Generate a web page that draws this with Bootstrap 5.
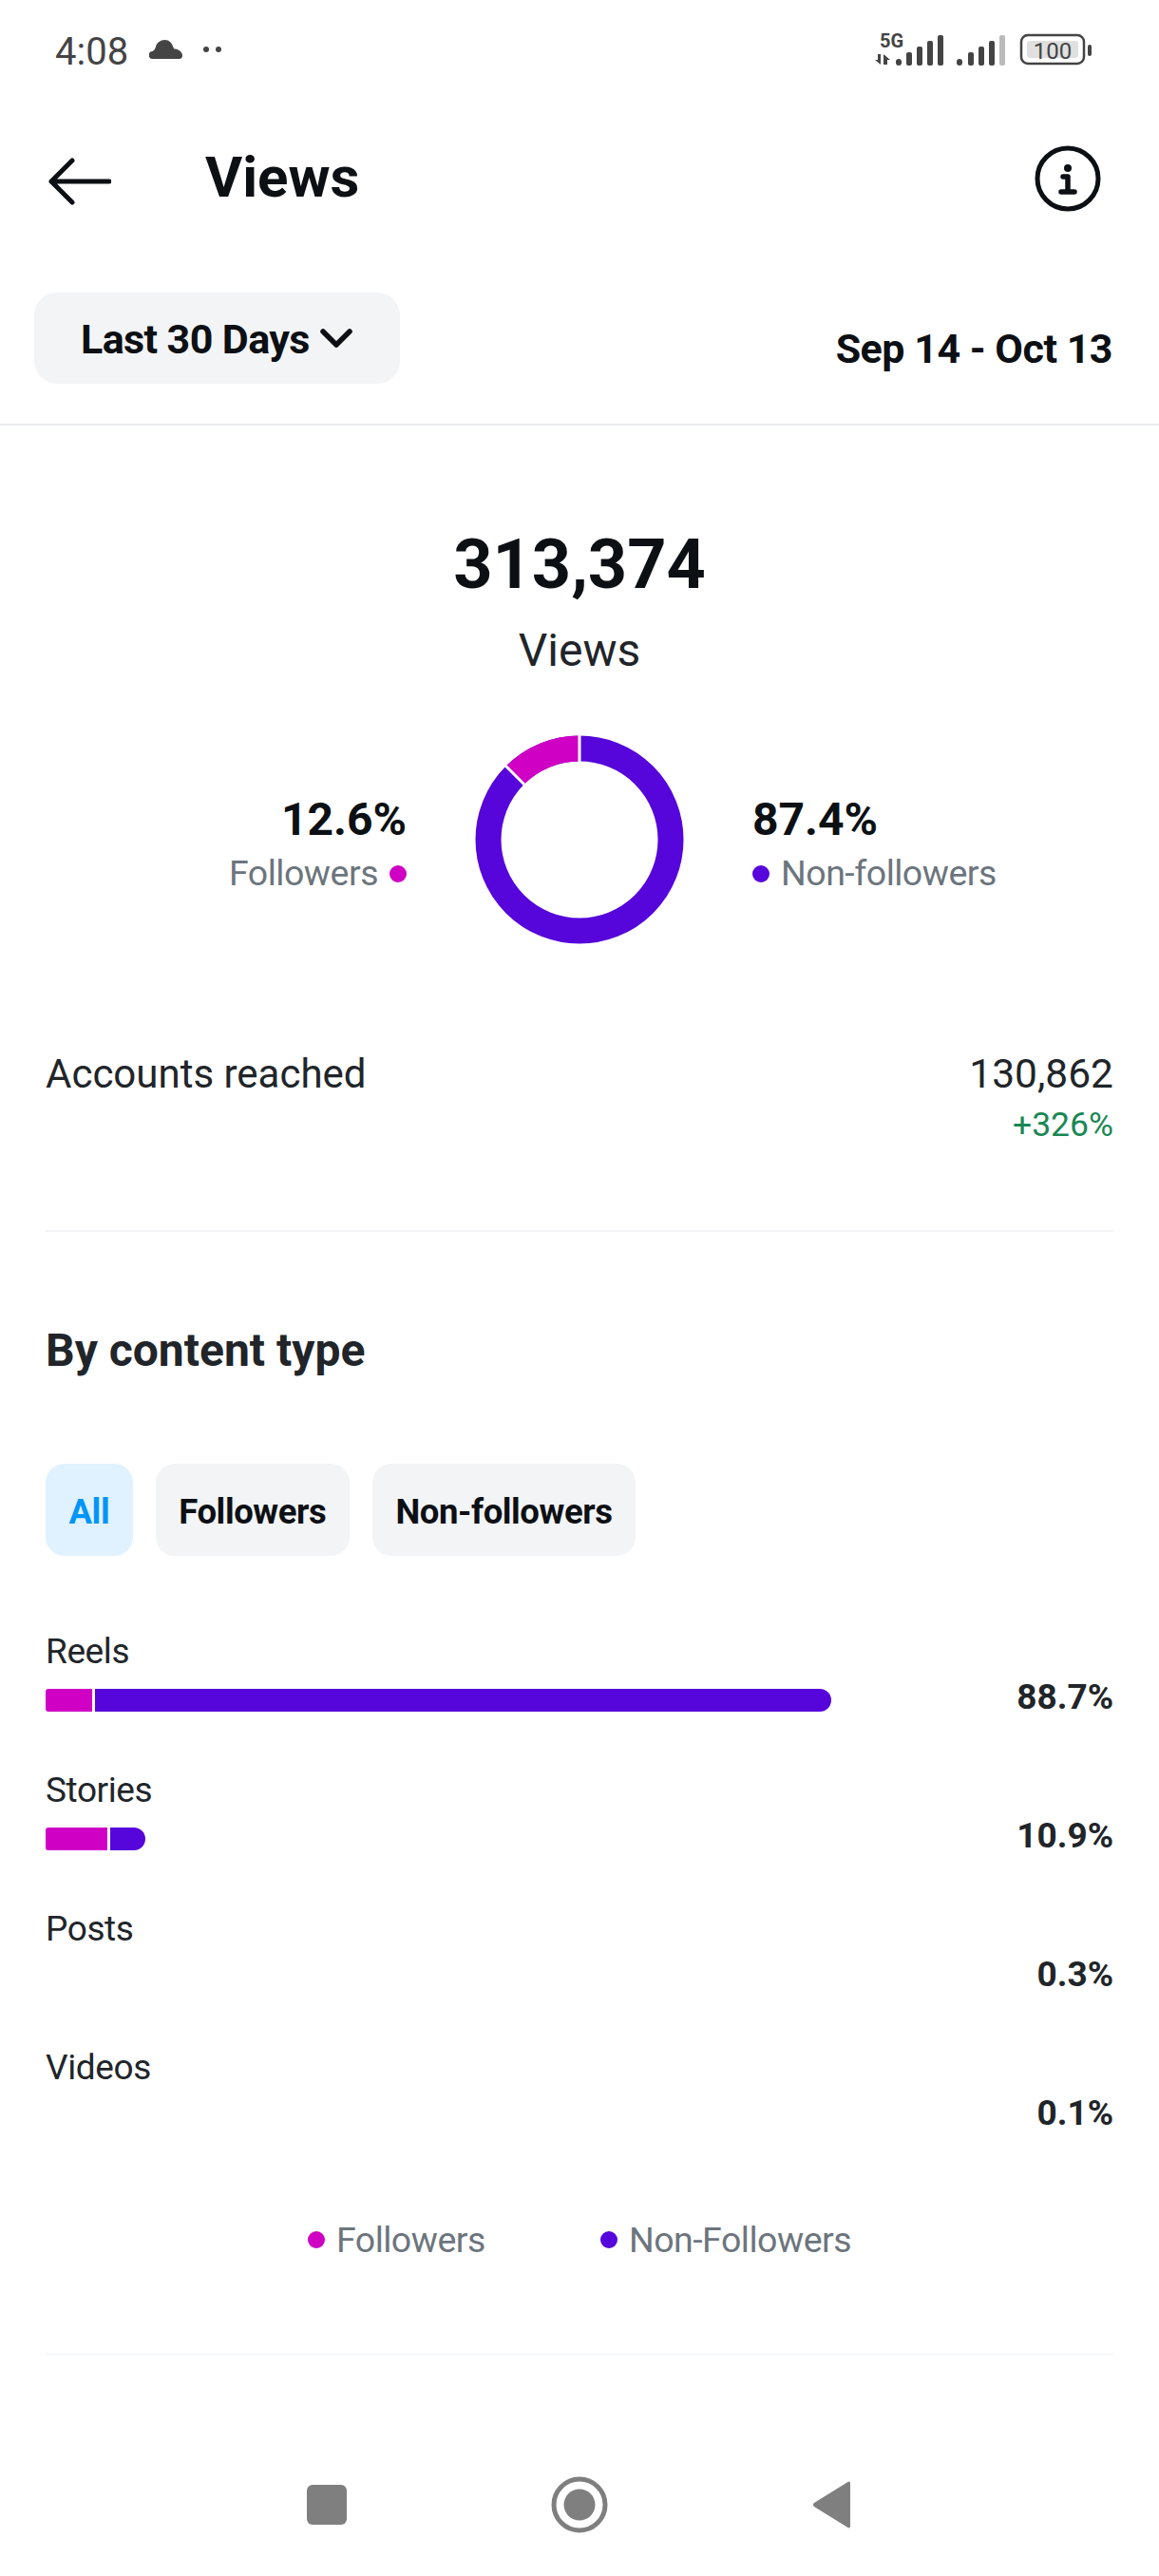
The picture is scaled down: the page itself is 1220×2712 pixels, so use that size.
<!DOCTYPE html>
<html lang="en">
<head>
<meta charset="utf-8">
<title>Views</title>
<link href="https://cdn.jsdelivr.net/npm/bootstrap@5.3.0/dist/css/bootstrap.min.css" rel="stylesheet">
<style>
:root { --ink:#0c1014; --pink:#cf00c4; --violet:#5605db; --mute:#6c757d; }
body { font-family: Roboto, "Liberation Sans", sans-serif; color: var(--ink); background:#fff; width:1220px; }
.status-bar { height:109px; padding:0 71px 0 58px; color:#444; }
.clock { font-size:40px; line-height:1; }
.lift-icon { margin-bottom:6px; margin-left:22px; }
.head-bar { height:158px; padding:0 61px 0 51px; }
.arrow-ico { margin-top:6px; }
.head-title { font-size:60px; line-height:1; font-weight:700; margin:0 0 2px 99px; }
.filter-row { padding:41px 49px 42px 36px; border-bottom:2px solid #e9ecef; }
.range-btn { height:96px; width:385px; background:#f3f4f6; border:0; border-radius:24px; font-size:43px; font-weight:700; letter-spacing:-.6px; color:var(--ink); padding:0 0 0 49px; }
.range-txt { padding-top:3px; }
.chev-ico { margin-left:11px; }
.range-date { font-size:43px; line-height:50px; font-weight:700; letter-spacing:-.5px; margin-top:34px; }
.total-num { font-size:72px; line-height:80px; font-weight:700; margin-top:107px; }
.total-lbl { font-size:48px; line-height:60px; margin-top:20px; color:#212529; }
.donut-row { margin-top:59px; height:220px; gap:72px; }
.donut-side { flex:1 1 0; padding-top:60px; }
.side-pct { font-size:48px; line-height:57px; font-weight:700; }
.side-lbl { font-size:37.5px; line-height:57px; letter-spacing:-.5px; color:var(--mute); }
.dot-mark { width:18px; height:18px; border-radius:50%; flex:none; }
.dot-pink { background:var(--pink); }
.dot-violet { background:var(--violet); }
.pad-x { padding-left:48px; padding-right:48px; }
.reach-row { margin-top:112px; color:#212529; font-size:42px; line-height:50px; }
.reach-num { font-size:42.5px; }
.reach-up { font-size:35.5px; line-height:44px; margin-top:6px; color:#198754; }
.soft-rule { height:2px; margin:89px 48px 0; background:#f3f4f6; }
.type-title { font-size:48px; line-height:60px; font-weight:700; margin:95px 0 0; color:#212529; }
.chip-row { margin-top:89px; gap:24px; }
.chip-btn { height:97px; border:0; border-radius:20px; background:#f3f4f6; color:var(--ink); font-size:36.5px; font-weight:700; letter-spacing:-.4px; padding:5px 24.5px 0; }
.chip-btn.chip-on { background:#e0f1ff; color:#0095f6; }
.bars-wrap { margin-top:76px; }
.bar-row { height:88px; margin-bottom:58px; }
.bar-row:last-child { margin-bottom:0; }
.bar-lbl { font-size:37px; line-height:44px; letter-spacing:-.4px; padding-top:3px; height:47px; color:#212529; }
.bar-track { height:24px; margin-top:17px; gap:3px; }
.seg-a { background:var(--pink); border-radius:3px 0 0 3px; }
.seg-b { background:var(--violet); border-radius:0 13px 13px 0; }
.bar-val { font-size:37px; line-height:44px; font-weight:700; padding-top:51px; color:#212529; }
.legend-row { margin-top:96px; gap:121px; font-size:37.5px; line-height:44px; letter-spacing:-.5px; color:var(--mute); }
.rule-low { height:3px; margin:97px 48px 0; background:#f8f9fa; }
.nav-keys { margin-top:127px; height:60px; gap:206px; }
</style>
</head>
<body>
<div class="status-bar d-flex justify-content-between align-items-center">
  <div class="d-flex align-items-center">
    <span class="clock">4:08</span>
    <svg class="lift-icon" width="35" height="20" viewBox="0 0 35 20" fill="#444"><path d="M4 20a4 4 0 0 1-.5-8C5 11 6 10.500 7 7c1-4 5-7 9.500-7S24 3 25.500 8c.3 1 1 1.500 2 1.600C31 10 35 13 35 16.500 35 19 33.500 20 31.500 20z"/></svg>
    <svg class="lift-icon" width="19" height="6" viewBox="0 0 19 6" fill="#444"><circle cx="3" cy="3" r="3"/><circle cx="16" cy="3" r="3"/></svg>
  </div>
  <svg width="228" height="109" viewBox="921 0 228 109">
    <text x="926" y="50" font-family="Roboto, sans-serif" font-size="20" font-weight="700" fill="#444">5G</text>
    <path fill="#444" d="M921 63h3v-6h3v11zM930 57l7 6h-3v5h-4z"/>
    <g fill="#444">
      <rect x="943" y="62" width="6" height="7" rx="3"/><rect x="954" y="55" width="6" height="14" rx="2"/><rect x="965" y="49" width="6" height="20" rx="2"/><rect x="976" y="43" width="6" height="26" rx="2"/><rect x="987" y="37" width="6" height="32" rx="2"/>
      <rect x="1007" y="62" width="6" height="7" rx="3"/><rect x="1019" y="55" width="6" height="14" rx="2"/><rect x="1030" y="49" width="6" height="20" rx="2"/><rect x="1041" y="43" width="6" height="26" rx="2"/>
    </g>
    <rect x="1052" y="37" width="6" height="32" rx="2" fill="#bbb"/>
    <rect x="1075" y="37" width="66" height="30" rx="7" fill="none" stroke="#444" stroke-width="2.500"/>
    <rect x="1081" y="43" width="54" height="18" rx="3" fill="#e0e0e0"/>
    <text x="1108" y="62" text-anchor="middle" font-family="Roboto, sans-serif" font-size="24" fill="#444">100</text>
    <rect x="1145" y="47" width="4" height="12" rx="2" fill="#444"/>
  </svg>
</div>

<div class="head-bar d-flex align-items-center">
  <svg class="arrow-ico" width="66" height="50" viewBox="0 0 66 50" fill="none" stroke="#0c1014" stroke-width="5" stroke-linecap="round" stroke-linejoin="round"><path d="M64 25H3M25 3L3 25l22 22"/></svg>
  <h1 class="head-title">Views</h1>
  <svg class="ms-auto" width="70" height="70" viewBox="0 0 70 70"><circle cx="35" cy="35" r="32" fill="none" stroke="#0c1014" stroke-width="5"/><circle cx="35" cy="24" r="4" fill="#0c1014"/><path d="M30 33h5v16M28 49h14" fill="none" stroke="#0c1014" stroke-width="5.500" stroke-linecap="round" stroke-linejoin="round"/></svg>
</div>

<div class="filter-row d-flex justify-content-between align-items-start">
  <button type="button" class="btn range-btn d-flex align-items-center"><span class="range-txt">Last 30 Days</span>
    <svg class="chev-ico" width="34" height="20" viewBox="0 0 34 20" fill="none" stroke="#0c1014" stroke-width="5.500" stroke-linecap="round" stroke-linejoin="round"><path d="M3 3l14 14L31 3"/></svg>
  </button>
  <div class="range-date">Sep 14 - Oct 13</div>
</div>

<div class="text-center total-num">313,374</div>
<div class="text-center total-lbl">Views</div>

<div class="donut-row d-flex">
  <div class="donut-side text-end">
    <div class="side-pct">12.6%</div>
    <div class="side-lbl d-flex justify-content-end align-items-center gap-2">Followers <span class="dot-mark dot-pink ms-1"></span></div>
  </div>
  <svg width="220" height="220" viewBox="0 0 220 220">
    <circle cx="110" cy="110" r="96" fill="none" stroke="#5605db" stroke-width="27"/>
    <path d="M110 14A96 96 0 0 0 41.600 42.600" fill="none" stroke="#cf00c4" stroke-width="27"/>
    <path d="M110 0v28M32 32l20 20" stroke="#fff" stroke-width="3" fill="none"/>
  </svg>
  <div class="donut-side">
    <div class="side-pct">87.4%</div>
    <div class="side-lbl d-flex align-items-center gap-2"><span class="dot-mark dot-violet me-1"></span>Non-followers</div>
  </div>
</div>

<div class="reach-row pad-x d-flex justify-content-between">
  <div>Accounts reached</div>
  <div class="text-end reach-num">130,862<div class="reach-up">+326%</div></div>
</div>
<div class="soft-rule"></div>

<div class="pad-x">
  <h2 class="type-title">By content type</h2>
  <div class="chip-row d-flex">
    <button type="button" class="btn chip-btn chip-on">All</button>
    <button type="button" class="btn chip-btn">Followers</button>
    <button type="button" class="btn chip-btn">Non-followers</button>
  </div>
  <div class="bars-wrap">
    <div class="bar-row d-flex justify-content-between">
      <div class="flex-grow-1"><div class="bar-lbl">Reels</div><div class="bar-track d-flex"><div class="seg-a" style="width:49px"></div><div class="seg-b" style="width:775px"></div></div></div>
      <div class="bar-val">88.7%</div>
    </div>
    <div class="bar-row d-flex justify-content-between">
      <div class="flex-grow-1"><div class="bar-lbl">Stories</div><div class="bar-track d-flex"><div class="seg-a" style="width:65px"></div><div class="seg-b" style="width:37px"></div></div></div>
      <div class="bar-val">10.9%</div>
    </div>
    <div class="bar-row d-flex justify-content-between">
      <div class="flex-grow-1"><div class="bar-lbl">Posts</div></div>
      <div class="bar-val">0.3%</div>
    </div>
    <div class="bar-row d-flex justify-content-between">
      <div class="flex-grow-1"><div class="bar-lbl">Videos</div></div>
      <div class="bar-val">0.1%</div>
    </div>
  </div>
  <div class="legend-row d-flex justify-content-center">
    <div class="d-flex align-items-center gap-2"><span class="dot-mark dot-pink"></span><span class="ms-1">Followers</span></div>
    <div class="d-flex align-items-center gap-2"><span class="dot-mark dot-violet"></span><span class="ms-1">Non-Followers</span></div>
  </div>
</div>
<div class="rule-low"></div>

<div class="nav-keys d-flex justify-content-center align-items-center">
  <svg width="60" height="60" viewBox="0 0 60 60"><rect x="9" y="9" width="42" height="42" rx="6" fill="#7f7f7f"/></svg>
  <svg width="60" height="60" viewBox="0 0 60 60"><circle cx="30" cy="30" r="27" fill="none" stroke="#7f7f7f" stroke-width="5"/><circle cx="30" cy="30" r="16.500" fill="#7f7f7f"/></svg>
  <svg width="60" height="60" viewBox="0 0 60 60"><path d="M49 7v46a1.500 1.500 0 0 1-2.500 1L11 32a2.500 2.500 0 0 1 0-4L46.500 6a1.500 1.500 0 0 1 2.500 1z" fill="#7f7f7f"/></svg>
</div>
<script src="https://cdn.jsdelivr.net/npm/bootstrap@5.3.0/dist/js/bootstrap.bundle.min.js"></script>
</body>
</html>
